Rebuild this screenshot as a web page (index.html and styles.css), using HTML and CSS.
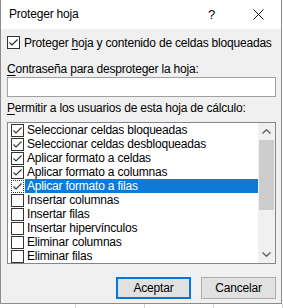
FILE: index.html
```html
<!DOCTYPE html>
<html lang="es">
  <head>
    <meta charset="UTF-8" />
    <title>Proteger hoja</title>
    <link rel="stylesheet" href="styles.css">
  </head>
  <body>
    <div class="window">
      <div class="titlebar">
        <span class="title">Proteger hoja</span>
        <span class="help">?</span>
        <span class="close">
          <svg width="11" height="11" viewBox="0 0 11 11"><path d="M0.5 0.5L10.5 10.5M10.5 0.5L0.5 10.5" stroke="#111" stroke-width="1"/></svg>
        </span>
      </div>
      <div class="content">
        <div class="check-row">
          <span class="box"><svg width="11" height="11" viewBox="0 0 11 11"><path d="M1.5 5.5L4 8L9.5 2.5" fill="none" stroke="#222" stroke-width="1.1"/></svg></span>
          <span>Proteger <u>h</u>oja y contenido de celdas bloqueadas</span>
        </div>
        <div class="label"><u>C</u>ontraseña para desproteger la hoja:</div>
        <div class="input"></div>
        <div class="label allow"><u>P</u>ermitir a los usuarios de esta hoja de cálculo:</div>
        <div class="list">
          <ul class="items">
            <li><span class="box"><svg width="11" height="11" viewBox="0 0 11 11"><path d="M1.5 5.5L4 8L9.5 2.5" fill="none" stroke="#333" stroke-width="1.1"/></svg></span><span class="text">Seleccionar celdas bloqueadas</span></li>
            <li><span class="box"><svg width="11" height="11" viewBox="0 0 11 11"><path d="M1.5 5.5L4 8L9.5 2.5" fill="none" stroke="#333" stroke-width="1.1"/></svg></span><span class="text">Seleccionar celdas desbloqueadas</span></li>
            <li><span class="box"><svg width="11" height="11" viewBox="0 0 11 11"><path d="M1.5 5.5L4 8L9.5 2.5" fill="none" stroke="#333" stroke-width="1.1"/></svg></span><span class="text">Aplicar formato a celdas</span></li>
            <li><span class="box"><svg width="11" height="11" viewBox="0 0 11 11"><path d="M1.5 5.5L4 8L9.5 2.5" fill="none" stroke="#333" stroke-width="1.1"/></svg></span><span class="text">Aplicar formato a columnas</span></li>
            <li class="selected"><span class="box focus"><svg width="11" height="11" viewBox="0 0 11 11"><path d="M1.5 5.5L4 8L9.5 2.5" fill="none" stroke="#333" stroke-width="1.1"/></svg></span><span class="text">Aplicar formato a filas</span></li>
            <li><span class="box"></span><span class="text">Insertar columnas</span></li>
            <li><span class="box"></span><span class="text">Insertar filas</span></li>
            <li><span class="box"></span><span class="text">Insertar hipervínculos</span></li>
            <li><span class="box"></span><span class="text">Eliminar columnas</span></li>
            <li><span class="box"></span><span class="text">Eliminar filas</span></li>
          </ul>
          <div class="scrollbar">
            <span class="arrow"><svg width="9" height="5" viewBox="0 0 9 5"><path d="M0.5 4.5L4.5 0.8L8.5 4.5" fill="none" stroke="#606060" stroke-width="1.4"/></svg></span>
            <span class="thumb"></span>
            <span class="track"></span>
            <span class="arrow"><svg width="9" height="5" viewBox="0 0 9 5"><path d="M0.5 0.5L4.5 4.2L8.5 0.5" fill="none" stroke="#606060" stroke-width="1.4"/></svg></span>
          </div>
        </div>
        <div class="buttons">
          <button class="btn default">Aceptar</button>
          <button class="btn">Cancelar</button>
        </div>
      </div>
    </div>
    <div class="sheet">
      <span class="cell first"></span>
      <span class="cell"></span>
      <span class="cell"></span>
      <span class="cell"></span>
    </div>
  </body>
</html>
```

FILE: styles.css
```css
* {
  box-sizing: border-box;
  padding: 0;
  margin: 0;
}
body {
  font-family: "Liberation Sans", Arial, sans-serif;
  font-size: 12px;
  letter-spacing: -0.2px;
  color: #000;
  background: #fff;
  width: 283px;
  height: 308px;
  overflow: hidden;
}
u {
  text-decoration-thickness: 1px;
  text-underline-offset: 2px;
}
.window {
  width: 282px;
  height: 304px;
  border: solid 1px #8c8c8c;
  border-top: none;
  background: #f0f0f0;
  display: flex;
  flex-direction: column;
}
.titlebar {
  height: 29px;
  background: #fff;
  display: flex;
  align-items: center;
  padding: 0 0 1px 8px;
}
.title {
  flex: 1;
}
.help {
  width: 12px;
  margin-right: 33px;
  font-size: 13px;
}
.close {
  display: flex;
  margin-right: 17px;
}
.content {
  flex: 1;
  display: flex;
  flex-direction: column;
  padding: 5px 5px 0 6px;
}
.check-row {
  display: flex;
  align-items: center;
  height: 17px;
  gap: 4px;
}
.box {
  width: 13px;
  height: 13px;
  border: solid 1px #333;
  background: #fff;
  display: flex;
  align-items: center;
  justify-content: center;
  flex: none;
}
.label {
  margin-top: 10px;
  line-height: 16px;
}
.input {
  height: 20px;
  border: solid 1px #a0a0a0;
  background: #fff;
}
.allow {
  margin-top: 3px;
}
.list {
  margin-top: 6px;
  height: 142px;
  border: solid 1px #828790;
  background: #fff;
  display: flex;
}
.items {
  flex: 1;
  list-style: none;
}
.items li {
  height: 14px;
  display: flex;
  align-items: center;
  padding-left: 3px;
}
.items .box {
  border-color: #333;
}
.items .text {
  flex: 1;
  line-height: 14px;
  padding-left: 2px;
  margin-left: 1px;
}
.selected .text {
  background: #0c7bd8;
  color: #fff;
}
.focus {
  border-style: dotted;
}
.scrollbar {
  width: 17px;
  background: #f0f0f0;
  display: flex;
  flex-direction: column;
}
.arrow {
  height: 17px;
  display: flex;
  align-items: center;
  justify-content: center;
}
.thumb {
  height: 70px;
  margin: 0 1px;
  background: #cdcdcd;
}
.track {
  flex: 1;
}
.buttons {
  margin-top: 13px;
  display: flex;
  justify-content: flex-end;
  gap: 10px;
}
.btn {
  width: 75px;
  height: 22px;
  font-family: inherit;
  font-size: 12px;
  letter-spacing: -0.2px;
  background: #e1e1e1;
  border: solid 1px #adadad;
  color: #000;
}
.btn.default {
  border: solid 2px #0078d7;
}
.sheet {
  display: flex;
  height: 4px;
}
.cell {
  width: 81px;
  border-right: solid 1px #d4d4d4;
}
.cell.first {
  width: 89px;
}
```
